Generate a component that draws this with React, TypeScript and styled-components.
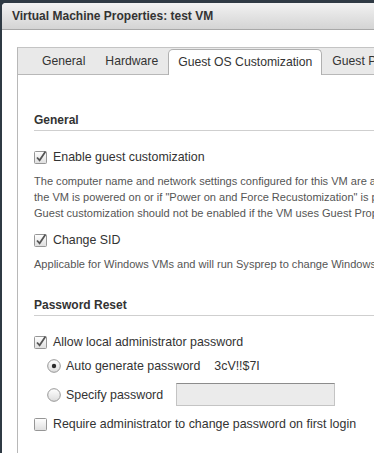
import React from 'react';
import styled, { createGlobalStyle } from 'styled-components';

const GlobalStyle = createGlobalStyle`
  html, body {
    margin: 0;
    padding: 0;
    background: #2f3a44;
    overflow: hidden;
  }
  body {
    font-family: "Liberation Sans", Arial, sans-serif;
    color: #333;
  }
`;

// Styled components
const Dialog = styled.div`
  margin: 3px 0 0 2px;
  width: 640px;
  height: 460px;
  background: #fff;
  border-radius: 4px 4px 0 0;
  overflow: hidden;
`;

const TitleBar = styled.div`
  height: 26px;
  display: flex;
  align-items: center;
  padding-left: 10px;
  background: linear-gradient(#f2f2f2, #d4d4d4);
  border-bottom: 1px solid #a8a8a8;
  font-size: 12px;
  font-weight: bold;
  color: #333;
`;

const Body = styled.div`
  padding: 17px 0 0 15px;
`;

const Panel = styled.div`
  border-left: 1px solid #b8b8b8;
  border-top: 1px solid #c4c4c4;
  height: 420px;
`;

const TabBar = styled.div`
  display: flex;
  align-items: flex-end;
  height: 26px;
  padding-left: 14px;
  background: #e9e9e9;
  border-bottom: 1px solid #b8b8b8;
`;

const Tab = styled.div<{ $active?: boolean }>`
  height: ${p => (p.$active ? '24px' : '26px')};
  display: flex;
  align-items: center;
  padding: 0 9px;
  font-size: 12.2px;
  color: #333;
  white-space: nowrap;
  background: ${p => (p.$active ? '#fff' : 'transparent')};
  border: ${p => (p.$active ? '1px solid #b0b0b0' : '1px solid transparent')};
  border-bottom: none;
  border-radius: 5px 5px 0 0;
  margin-bottom: ${p => (p.$active ? '-1px' : '0')};
  padding-bottom: ${p => (p.$active ? '1px' : '0')};
`;

const Content = styled.div`
  padding: 38px 0 0 16px;
`;

const SectionTitle = styled.div<{ $gap?: number }>`
  margin-top: ${p => p.$gap || 0}px;
  font-size: 12px;
  line-height: 14px;
  font-weight: bold;
  color: #333;
  padding-bottom: 3px;
  border-bottom: 1px solid #cfcfcf;
`;

const Row = styled.div<{ $gap: number; $indent?: number }>`
  display: flex;
  align-items: center;
  gap: 5px;
  height: 16px;
  margin-top: ${p => p.$gap}px;
  margin-left: ${p => p.$indent || 0}px;
  font-size: 12.4px;
  color: #333;
  white-space: nowrap;
`;

const Description = styled.div<{ $gap: number }>`
  margin-top: ${p => p.$gap}px;
  font-size: 11.05px;
  line-height: 16px;
  color: #555;
  white-space: nowrap;
`;

const Value = styled.span<{ $left: number }>`
  margin-left: ${p => p.$left}px;
`;

const PasswordField = styled.input`
  box-sizing: border-box;
  width: 159px;
  height: 23px;
  margin-left: 8px;
  background: #ebebeb;
  border: 1px solid #c4c4c4;
  border-top-color: #8c8c8c;
  padding: 0 4px;
`;

const FieldRow = styled(Row)`
  height: 23px;
`;

const Checkbox: React.FC<{ checked?: boolean }> = ({ checked }) => (
  <svg width="14" height="14" viewBox="0 0 14 14" style={{ flex: 'none' }}>
    <defs>
      <linearGradient id="cbg" x1="0" y1="0" x2="0" y2="1">
        <stop offset="0" stopColor="#ffffff" />
        <stop offset="1" stopColor="#dedede" />
      </linearGradient>
    </defs>
    <rect x="0.5" y="1.5" width="12" height="12" rx="1" fill="url(#cbg)" stroke="#969696" />
    {checked && (
      <path d="M3 7.5 L5.6 10.3 L11.5 1.5" fill="none" stroke="#555" strokeWidth="1.8" />
    )}
  </svg>
);

const Radio: React.FC<{ checked?: boolean }> = ({ checked }) => (
  <svg width="14" height="14" viewBox="0 0 14 14" style={{ flex: 'none' }}>
    <defs>
      <linearGradient id="rbg" x1="0" y1="0" x2="0" y2="1">
        <stop offset="0" stopColor="#ffffff" />
        <stop offset="1" stopColor="#dcdcdc" />
      </linearGradient>
    </defs>
    <circle cx="7" cy="7" r="6.3" fill="url(#rbg)" stroke="#969696" />
    {checked && <circle cx="7" cy="7" r="2.2" fill="#2b2b2b" />}
  </svg>
);

const App: React.FC = () => {
  return (
    <>
      <GlobalStyle />
      <Dialog>
        <TitleBar>Virtual Machine Properties: test VM</TitleBar>
        <Body>
          <Panel>
            <TabBar>
              <Tab>General</Tab>
              <Tab>Hardware</Tab>
              <Tab $active>Guest OS Customization</Tab>
              <Tab>Guest Properties</Tab>
            </TabBar>
            <Content>
              <SectionTitle>General</SectionTitle>
              <Row $gap={18}>
                <Checkbox checked />
                Enable guest customization
              </Row>
              <Description $gap={8}>
                The computer name and network settings configured for this VM are applied when
                <br />
                the VM is powered on or if "Power on and Force Recustomization" is performed.
                <br />
                Guest customization should not be enabled if the VM uses Guest Properties.
              </Description>
              <Row $gap={11}>
                <Checkbox checked />
                Change SID
              </Row>
              <Description $gap={8}>
                Applicable for Windows VMs and will run Sysprep to change Windows SID.
              </Description>

              <SectionTitle $gap={26}>Password Reset</SectionTitle>
              <Row $gap={18}>
                <Checkbox checked />
                Allow local administrator password
              </Row>
              <Row $gap={8} $indent={13}>
                <Radio checked />
                Auto generate password
                <Value $left={9}>3cV!!$7I</Value>
              </Row>
              <FieldRow $gap={9} $indent={13}>
                <Radio />
                Specify password
                <PasswordField type="password" />
              </FieldRow>
              <Row $gap={10}>
                <Checkbox />
                Require administrator to change password on first login
              </Row>
            </Content>
          </Panel>
        </Body>
      </Dialog>
    </>
  );
};

export default App;
